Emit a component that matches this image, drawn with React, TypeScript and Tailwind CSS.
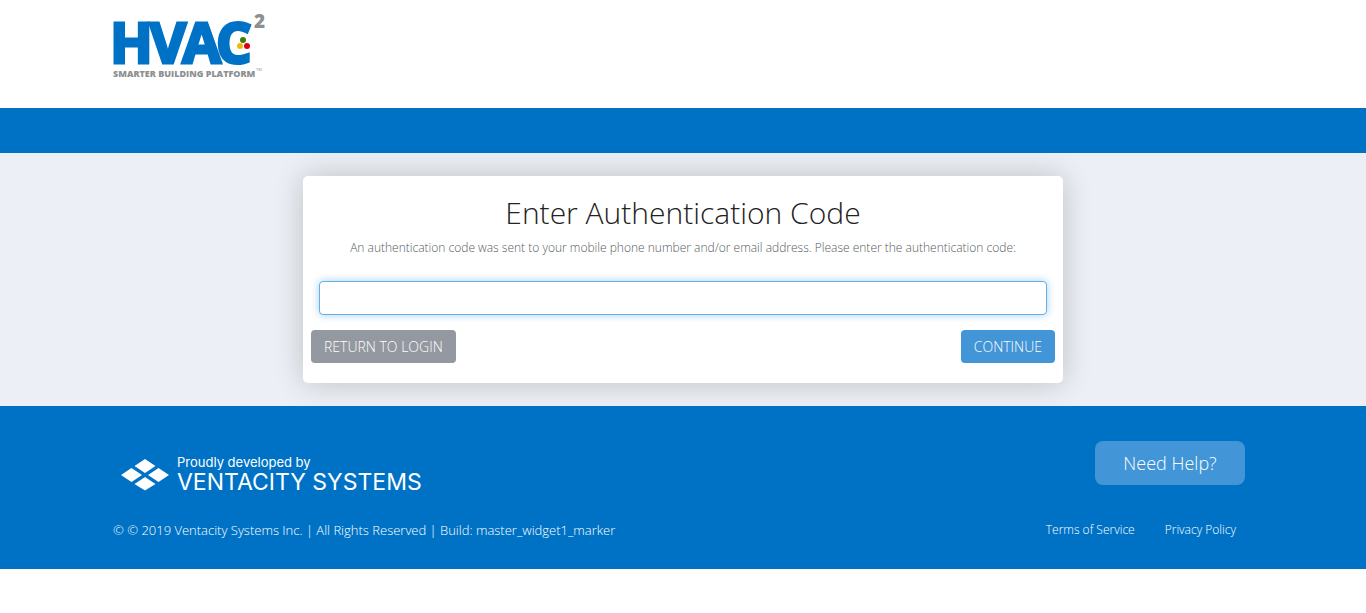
import React from "react";

function HvacLogo() {
  return (
    <svg className="overflow-visible" width="155" height="68" viewBox="0 0 155 68" role="img" aria-label="HVAC2 Smarter Building Platform">
      <text x="-3" y="51" dx="0 -3 -4 -5" fill="#0072c6" stroke="#0072c6" strokeWidth="3" fontSize="56" fontWeight="700" fontFamily="'Open Sans', sans-serif">HVAC</text>
      <text x="141" y="16" fill="#8d8f91" fontSize="19" fontWeight="800" fontFamily="'Open Sans', sans-serif">2</text>
      <circle cx="130" cy="28" r="3" fill="#3f7d0b" />
      <circle cx="127" cy="34" r="3" fill="#f0b90b" />
      <circle cx="134" cy="34" r="3" fill="#d9001b" />
      <text x="0" y="65" fill="#8d8f91" fontSize="9" fontWeight="800" fontFamily="'Open Sans', sans-serif">SMARTER BUILDING PLATFORM</text>
      <text x="143" y="59" fill="#8d8f91" fontSize="4" fontFamily="'Open Sans', sans-serif">TM</text>
    </svg>
  );
}

function VentacityLogo() {
  return (
    <div className="flex items-center gap-2 pl-2">
      <svg width="48" height="32" viewBox="0 0 48 32" fill="#fff" aria-hidden="true">
        <path d="M24 0 34.500 7 24 14 13.500 7ZM10.500 9 21 16 10.500 23 0 16ZM37.500 9 48 16 37.500 23 27 16ZM24 18 34.500 25 24 31.500 13.500 25Z" />
      </svg>
      <div className="pb-[2px] font-['Inter','Open_Sans',sans-serif]">
        <div className="text-[13px] leading-4">Proudly developed by</div>
        <div className="text-[23px] leading-6">VENTACITY SYSTEMS</div>
      </div>
    </div>
  );
}

export default function App() {
  return (
    <div className="bg-white font-['Open_Sans',sans-serif]">
      <header>
        <div className="mx-auto h-27 max-w-[1170px] px-[15px] pt-3">
          <a href="#" className="inline-block"><HvacLogo /></a>
        </div>
        <div className="h-[45px] bg-[#0072c6]" />
      </header>

      <main className="bg-[#eceff5] px-4 py-[23px]">
        <form className="mx-auto max-w-[760px] rounded-[5px] bg-white px-2 pt-4 pb-5 shadow-[0_0_30px_rgba(0,0,0,0.2)]" onSubmit={(e) => e.preventDefault()}>
          <h1 className="text-center text-[30px] leading-[42px] font-light text-[#222]">Enter Authentication Code</h1>
          <label htmlFor="code" className="mt-1 block text-center text-xs leading-5 font-light text-[#555b61]">
            An authentication code was sent to your mobile phone number and/or email address. Please enter the authentication code:
          </label>
          <div className="mt-[23px] px-2">
            <input id="code" type="text" autoComplete="one-time-code" className="block h-[34px] w-full rounded border border-[#66afe9] bg-white px-3 text-sm shadow-[0_0_8px_rgba(102,175,233,0.6)] outline-none" />
          </div>
          <div className="mt-[15px] flex justify-between">
            <button type="button" className="h-[33px] rounded bg-[#9498a0] px-[13px] text-sm font-light text-white">RETURN TO LOGIN</button>
            <button type="submit" className="h-[33px] rounded bg-[#4295d6] px-[13px] text-sm font-light text-white">CONTINUE</button>
          </div>
        </form>
      </main>

      <footer className="bg-[#0072c6] text-white">
        <div className="mx-auto max-w-[1170px] px-[15px] pt-[35px] pb-[29px]">
          <div className="flex items-start justify-between pr-2">
            <div className="pt-[13px]"><VentacityLogo /></div>
            <button type="button" className="h-11 w-[150px] rounded-lg bg-[#4295d6] text-lg font-light">Need Help?</button>
          </div>
          <div className="mt-6 flex items-center justify-between pr-[17px]">
            <p className="text-[13px] leading-5 font-light">© © 2019 Ventacity Systems Inc. | All Rights Reserved | Build: master_widget1_marker</p>
            <nav className="flex gap-[30px] text-xs leading-5 font-light">
              <a href="#">Terms of Service</a>
              <a href="#">Privacy Policy</a>
            </nav>
          </div>
        </div>
      </footer>
    </div>
  );
}
